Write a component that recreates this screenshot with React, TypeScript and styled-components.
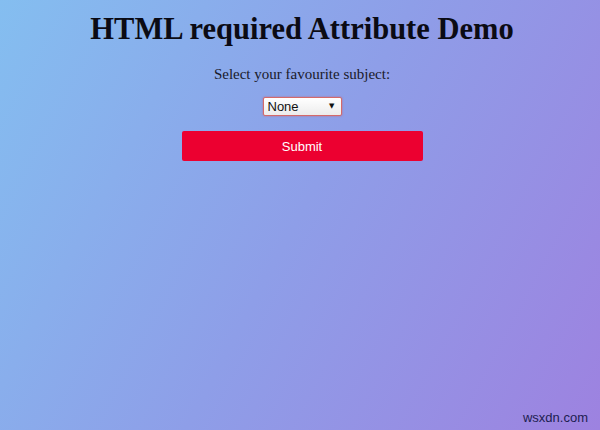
import styled, { createGlobalStyle } from "styled-components"

const GlobalStyle = createGlobalStyle`
  html, body {
    margin: 0;
    padding: 0;
    height: 100%;
  }
  #root {
    height: 100%;
  }
`

const Page = styled.div`
  position: relative;
  box-sizing: border-box;
  width: 100%;
  height: 100vh;
  overflow: hidden;
  background: linear-gradient(118deg, #84bef0 0%, #8e9ee8 50%, #9d82e0 100%);
  font-family: "Liberation Serif", "Times New Roman", serif;
  color: #111;
  display: flex;
  flex-direction: column;
  align-items: center;
  padding: 12px 0 0 4px;
`

const Title = styled.h1`
  margin: 0;
  font-size: 30.5px;
  font-weight: bold;
  line-height: 34px;
  color: #0b0b14;
`

const Label = styled.p`
  margin: 19px 0 0;
  font-size: 15px;
  line-height: 19px;
  color: #1a1a2a;
`

const SelectWrap = styled.div`
  position: relative;
  margin-top: 13px;
  width: 79px;
  height: 19px;
`

const Select = styled.select`
  appearance: none;
  box-sizing: border-box;
  width: 100%;
  height: 100%;
  margin: 0;
  padding: 0 0 0 4px;
  border: 1px solid #d46a6a;
  border-radius: 2px;
  background: linear-gradient(#ffffff, #ececec);
  box-shadow: 0 0 2px rgba(220, 80, 80, 0.7);
  font-family: "Liberation Sans", Arial, sans-serif;
  font-size: 13px;
  color: #111;
  outline: none;
`

const Arrow = styled.span`
  position: absolute;
  right: 7px;
  top: 4px;
  font-size: 7px;
  line-height: 10px;
  color: #111;
  pointer-events: none;
  font-family: "DejaVu Sans", sans-serif;
`

const SubmitButton = styled.button`
  margin-top: 15px;
  width: 241px;
  height: 30px;
  border: none;
  border-radius: 2px;
  background: #ec0030;
  color: #fff;
  font-family: "Liberation Sans", Arial, sans-serif;
  font-size: 13px;
  cursor: pointer;
`

const Watermark = styled.span`
  position: absolute;
  right: 12px;
  bottom: 5px;
  font-family: "Liberation Sans", Arial, sans-serif;
  font-size: 13px;
  color: #1c2050;
`

const App = () => {
  return (
    <Page>
      <GlobalStyle />
      <Title>HTML required Attribute Demo</Title>
      <Label>Select your favourite subject:</Label>
      <SelectWrap>
        <Select required defaultValue="">
          <option value="">None</option>
          <option value="html">HTML</option>
          <option value="css">CSS</option>
          <option value="js">JavaScript</option>
        </Select>
        <Arrow>▼</Arrow>
      </SelectWrap>
      <SubmitButton type="submit">Submit</SubmitButton>
      <Watermark>wsxdn.com</Watermark>
    </Page>
  )
}

export default App
